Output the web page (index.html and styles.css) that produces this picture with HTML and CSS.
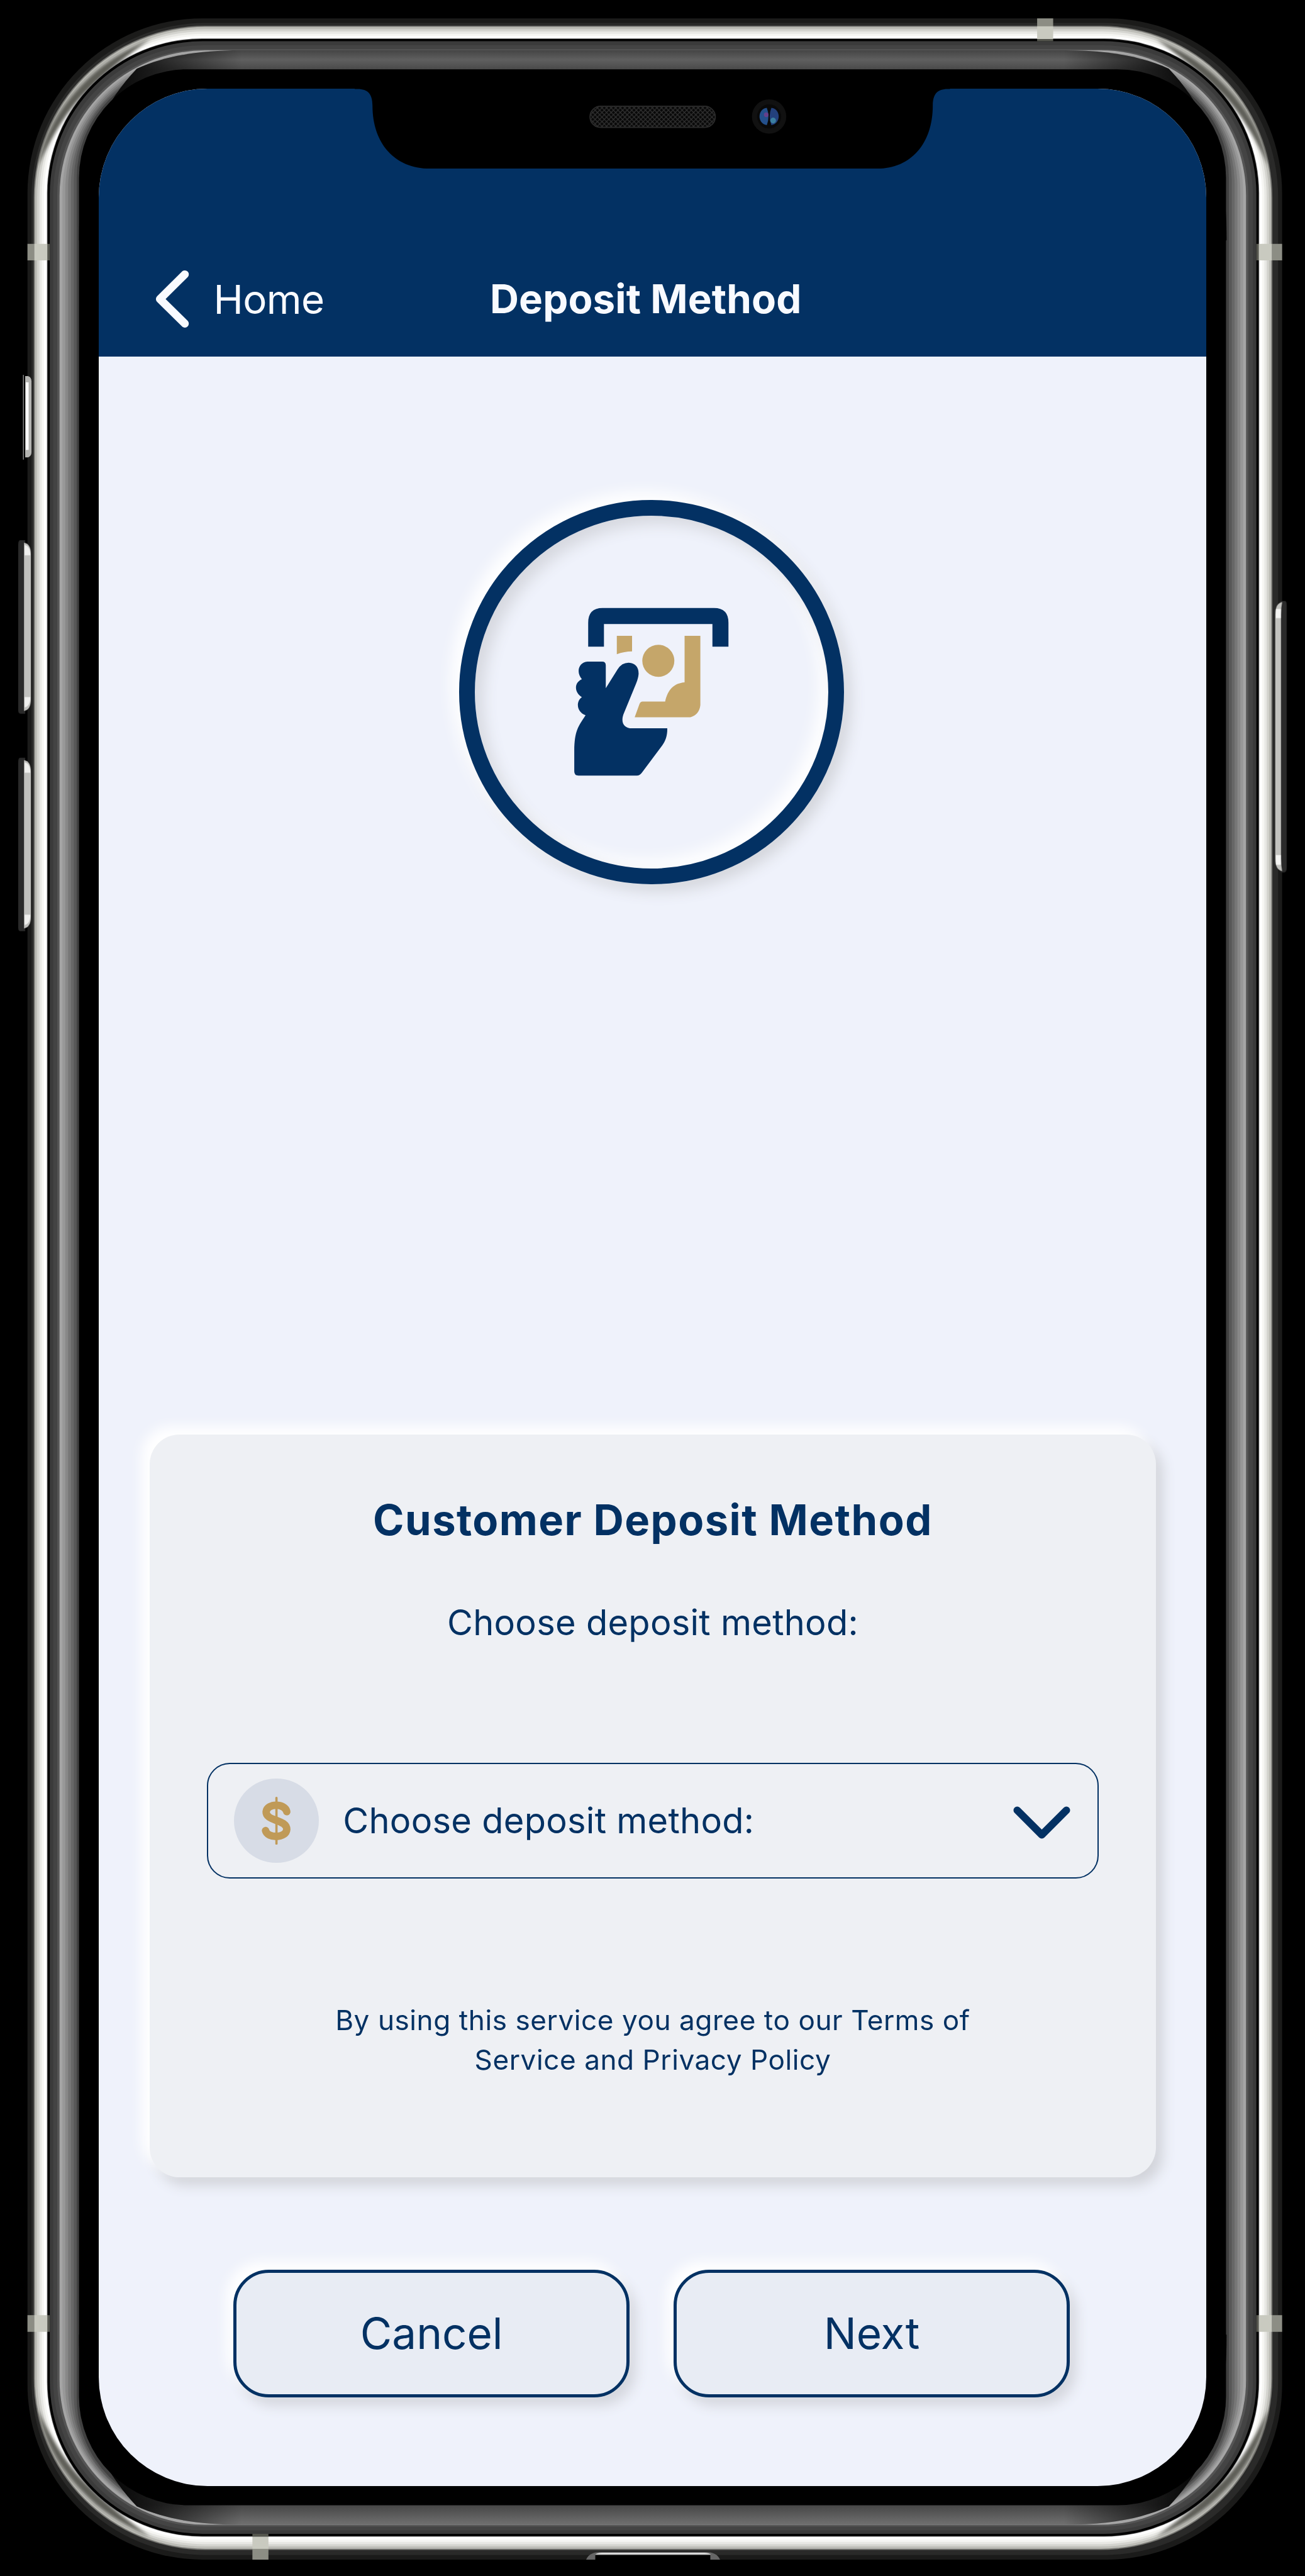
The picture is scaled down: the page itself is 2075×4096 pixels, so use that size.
FILE: index.html
```html
<!DOCTYPE html>
<html lang="en">
<head>
<meta charset="utf-8">
<title>Deposit Method</title>
<link rel="stylesheet" href="styles.css">
</head>
<body>
<div class="device">
  <svg class="frame" viewBox="0 0 2280 4500" aria-hidden="true">
    <defs>
      <linearGradient id="capTop" x1="0" y1="88" x2="0" y2="121" gradientUnits="userSpaceOnUse">
        <stop offset="0" stop-color="#454545"/><stop offset=".5" stop-color="#5f5f5f"/><stop offset="1" stop-color="#4a4a4a"/>
      </linearGradient>
      <linearGradient id="capBottom" x1="0" y1="4376" x2="0" y2="4411" gradientUnits="userSpaceOnUse">
        <stop offset="0" stop-color="#454545"/><stop offset="1" stop-color="#707070"/>
      </linearGradient>
      <linearGradient id="capFade" x1="170" y1="0" x2="2111" y2="0" gradientUnits="userSpaceOnUse">
        <stop offset="0" stop-color="#000"/><stop offset=".035" stop-color="#000" stop-opacity=".75"/><stop offset=".13" stop-color="#000" stop-opacity="0"/>
        <stop offset=".87" stop-color="#000" stop-opacity="0"/><stop offset=".965" stop-color="#000" stop-opacity=".75"/><stop offset="1" stop-color="#000"/>
      </linearGradient>
      <filter id="soft" x="-20%" y="-20%" width="140%" height="140%"><feGaussianBlur stdDeviation="3"/></filter>
      <path id="shade" d="M66 290C80 225 110 178 155 135C188 104 225 84 262 68C225 95 188 124 156 156C116 192 90 240 66 290Z"/>
      <g id="sideKey">
        <path d="M44 0H35Q32 0 32 8V297Q32 303 36 303H44Z" fill="#2a2a2a"/>
        <path d="M42 4Q54 6 54 24V278Q54 296 42 298Z" fill="#c1c1be"/>
        <path d="M43 8Q53 10 53 26H43ZM43 292Q53 290 53 274H43Z" fill="#f0f0ee"/>
      </g>
    </defs>
    <!-- outer edge and polished rail -->
    <rect x="48" y="32" width="2192" height="4440" rx="306" fill="#1b1b1a"/>
    <rect x="55" y="40" width="2178" height="4424" rx="304" fill="#2a2a29"/>
    <rect x="59" y="45" width="2164" height="4410" rx="300" fill="#777773"/>
    <rect x="61" y="47" width="2160" height="4406" rx="298" fill="#bdbdb7"/>
    <rect x="65" y="51" width="2152" height="4398" rx="294" fill="#d4d4cf"/>
    <rect x="69" y="55" width="2144" height="4390" rx="288" fill="#e8e8e4"/>
    <rect x="73" y="59" width="2136" height="4382" rx="283" fill="#f6f6f3"/>
    <rect x="77" y="63" width="2128" height="4374" rx="278" fill="#fff"/>
    <g fill="#5d5d57" filter="url(#soft)">
      <use href="#shade"/>
      <use href="#shade" transform="matrix(-1 0 0 1 2282 0)"/>
      <use href="#shade" transform="matrix(1 0 0 -1 0 4500)"/>
      <use href="#shade" transform="matrix(-1 0 0 -1 2282 4500)"/>
    </g>
    <rect x="82" y="67" width="2118" height="4365" rx="271" fill="#777"/>
    <rect x="83" y="68" width="2116" height="4363" rx="270" fill="#000"/>
    <rect x="87" y="72" width="2108" height="4355" rx="267" fill="#3b3b3b"/>
    <rect x="93" y="79" width="2096" height="4342" rx="262" fill="#444"/>
    <rect x="100" y="86" width="2081" height="4328" rx="256" fill="#555"/>
    <!-- inner side rails -->
    <rect x="104" y="88" width="2073" height="4323" rx="254" fill="#a5a5a5"/>
    <rect x="109" y="92" width="2063" height="4314" rx="246" fill="#989898"/>
    <rect x="114" y="97" width="2053" height="4305" rx="236" fill="#888"/>
    <rect x="119" y="102" width="2043" height="4296" rx="226" fill="#777"/>
    <rect x="124" y="107" width="2033" height="4286" rx="216" fill="#676767"/>
    <rect x="129" y="112" width="2023" height="4277" rx="204" fill="#575757"/>
    <rect x="134" y="117" width="2013" height="4267" rx="194" fill="#404040"/>
    <path d="M138 420C138 300 158 205 239 120C290 97 350 88 420 88H1861C1931 88 1991 97 2042 120C2123 205 2143 300 2143 420Z" fill="url(#capTop)"/>
    <path d="M138 420C138 300 158 205 239 120C290 97 350 88 420 88H1861C1931 88 1991 97 2042 120C2123 205 2143 300 2143 420Z" fill="url(#capFade)"/>
    <path d="M138 4079C138 4199 158 4294 239 4379C290 4402 350 4411 420 4411H1861C1931 4411 1991 4402 2042 4379C2123 4294 2143 4199 2143 4079Z" fill="url(#capBottom)"/>
    <path d="M138 4079C138 4199 158 4294 239 4379C290 4402 350 4411 420 4411H1861C1931 4411 1991 4402 2042 4379C2123 4294 2143 4199 2143 4079Z" fill="url(#capFade)"/>
    <rect x="138" y="121" width="2004" height="4256" rx="190" fill="#000"/>
    <!-- antenna bands -->
    <g fill="#8c8d84">
      <path d="M48 426H60V455H48ZM2222 426H2240V455H2222ZM48 4045H60V4074H48ZM2222 4045H2240V4074H2222ZM1812 32H1840V46H1812ZM441 4453H469V4472H441Z"/>
      <path d="M60 426H83V455H60ZM2199 426H2222V455H2199ZM60 4045H83V4074H60ZM2199 4045H2222V4074H2199ZM1812 46H1840V68H1812ZM441 4432H469V4453H441Z" fill="#c9cac0"/>
      <path d="M83 426H87V455H83ZM2195 426H2199V455H2195ZM83 4045H87V4074H83ZM2195 4045H2199V4074H2195ZM1812 68H1840V72H1812ZM441 4427H469V4432H441Z" fill="#55564e"/>
    </g>
    <!-- charging port -->
    <path d="M1024 4472Q1030 4459 1048 4459H1234Q1252 4459 1258 4472Z" fill="#666"/>
    <path d="M1040 4463Q1044 4460 1052 4460H1230Q1238 4460 1242 4463Z" fill="#ddd"/>
    <path d="M1040 4464H1241V4474H1040Z" fill="#000"/>
    <!-- side keys -->
    <path d="M40 655H42V803H40Z" fill="#777"/>
    <path d="M42 655H44V803H42Z" fill="#000"/>
    <path d="M44 657H49Q55 659 55 666V790Q55 797 49 799H44Z" fill="#b5b5b2"/>
    <path d="M45 668H50V786H45Z" fill="#fff"/>
    <use href="#sideKey" y="944"/>
    <use href="#sideKey" y="1324"/>
    <path d="M2237 1050H2245Q2248 1050 2248 1058V1516Q2248 1524 2244 1524H2237Z" fill="#2a2a2a"/>
    <path d="M2240 1052Q2228 1054 2228 1074V1500Q2228 1520 2240 1522Q2238 1512 2238 1500V1074Q2238 1062 2240 1052Z" fill="#c3c3bf"/>
    <path d="M2229 1064H2238V1080H2229ZM2229 1494H2238V1511H2229Z" fill="#f4f4f2"/>
  </svg>

  <main class="screen">
    <header class="nav">
      <a class="back">
        <svg class="back-icon" viewBox="0 0 60 102"><path d="M51.500 8L8 51L51.500 94" /></svg>
        <span>Home</span>
      </a>
      <h1 class="nav-title">Deposit Method</h1>
    </header>

    <section class="hero">
      <div class="badge">
        <svg class="cash-icon" viewBox="490 460 590 645">
          <g class="navy">
            <path d="M543 609V518Q543 462 598 462H1022Q1077 462 1077 518V609H1016V523H603V609Z"/>
            <path d="M540 666H596Q610 666 610 680V767L655 695Q671 670 697 670Q735 673 735 712Q734 728 726 748L680 860C664 896 678 920 710 920H844C845 945 838 968 825 985L748 1088Q740 1100 728 1100H506Q490 1100 490 1084V1005C491 930 504 915 533 870C499 858 495 818 519 801C488 782 490 745 519 733C495 705 508 668 540 666Z"/>
          </g>
          <g class="gold">
            <path d="M652 568H710V627Q680 627 652 638Z"/>
            <circle cx="810" cy="663" r="61"/>
            <path d="M910 568H970V832Q966 868 932 878H720L738 828Q742 818 750 818H836C846 772 870 748 910 745Z"/>
          </g>
        </svg>
      </div>
    </section>

    <section class="card">
      <h2 class="card-title">Customer Deposit Method</h2>
      <p class="card-sub">Choose deposit method:</p>
      <div class="select">
        <span class="coin">
          <svg class="coin-icon" viewBox="0 0 54 84"><path class="thick" d="M45 26C42 11 11 11 9 26C8 43 45 39 45 57C44 73 11 73 8 59"/><path class="thin" d="M27 2V82"/></svg>
        </span>
        <span class="select-label">Choose deposit method:</span>
        <svg class="select-arrow" viewBox="0 0 100 58"><path d="M7 7L50 50L93 7"/></svg>
      </div>
      <p class="terms">By using this service you agree to our Terms of<br>Service and Privacy Policy</p>
    </section>

    <div class="actions">
      <button class="btn">Cancel</button>
      <button class="btn">Next</button>
    </div>
  </main>

  <svg class="notch" viewBox="620 150 1040 150" aria-hidden="true">
    <defs>
      <pattern id="mesh" width="8" height="8" patternUnits="userSpaceOnUse">
        <rect width="8" height="8" fill="#080808"/><path d="M0 0L8 8M8 0L0 8" stroke="#333" stroke-width="1.300"/>
      </pattern>
    </defs>
    <path d="M620 150V155H625C643 155 651 164 651 184C651 250 690 294 751 294H1533C1592 294 1630 250 1630 184C1630 164 1638 155 1656 155H1660V150Z" fill="#000"/>
    <rect x="1031" y="185" width="219" height="37" rx="18.500" fill="url(#mesh)" stroke="#2a2a2a" stroke-width="2"/>
    <circle cx="1344" cy="203" r="30" fill="#111"/>
    <circle cx="1344" cy="203" r="21" fill="#090909"/>
    <path d="M1340 188C1323 190 1323 216 1340 218Q1346 203 1340 188Z" fill="#24508c"/>
    <path d="M1348 188C1365 190 1365 216 1348 218Q1342 203 1348 188Z" fill="#23407c"/>
    <circle cx="1339" cy="200" r="4" fill="#65408c"/>
    <circle cx="1351" cy="210" r="5" fill="#3b7fa0"/>
  </svg>
</div>
</body>
</html>
```
FILE: styles.css
```css
html, body { margin: 0; background: #000; }
body { width: 2075px; height: 4096px; overflow: hidden; }
h1, h2, p { margin: 0; }

.device {
  --navy: #033163;
  zoom: 0.9101;
  position: relative;
  box-sizing: border-box;
  width: 2280px;
  height: 4500px;
  padding: 155px 172px 156px 173px;
  font-family: Inter, "Liberation Sans", sans-serif;
  color: var(--navy);
}
.frame { position: absolute; left: 0; top: 0; width: 2280px; height: 4500px; }
.notch { position: absolute; left: 620px; top: 150px; width: 1040px; height: 150px; }

.screen {
  position: relative;
  height: 4189px;
  border-radius: 190px;
  overflow: hidden;
  background: #eff2fb;
  display: flex;
  flex-direction: column;
}

.nav {
  height: 468px;
  box-sizing: border-box;
  padding: 316px 0 0 98px;
  background: var(--navy);
  color: #f8faff;
  display: grid;
  grid-template-columns: 585px auto 1fr;
  align-items: start;
}
.back { display: flex; align-items: center; gap: 42px; height: 102px; font-size: 70px; letter-spacing: -0.6px; }
.back-icon { width: 60px; height: 102px; fill: none; stroke: currentColor; stroke-width: 14; stroke-linecap: round; stroke-linejoin: round; }
.nav-title { font-size: 70px; font-weight: 700; line-height: 102px; letter-spacing: 0.1px; white-space: nowrap; }

.hero { height: 1883px; box-sizing: border-box; padding-top: 250px; display: flex; justify-content: center; align-items: flex-start; }
.badge {
  width: 672px;
  height: 672px;
  margin-right: 4px;
  box-sizing: border-box;
  border: 28px solid var(--navy);
  border-radius: 50%;
  display: flex;
  align-items: center;
  justify-content: center;
  box-shadow: -14px -14px 26px #fff, 12px 12px 26px #d3d5db, inset 14px 14px 26px #d6d8df, inset -14px -14px 28px #fff;
}
.cash-icon { width: 271px; height: 296px; }
.navy { fill: var(--navy); }
.gold { fill: #c5a66a; }

.card {
  width: 1759px;
  height: 1298px;
  margin-left: 88px;
  box-sizing: border-box;
  padding: 105px 100px 0;
  border-radius: 52px;
  background: #eef0f4;
  box-shadow: -14px -14px 22px #fff, 12px 14px 22px #d2d4da;
  text-align: center;
  flex: none;
}
.card-title { font-size: 73.5px; line-height: 90px; font-weight: 700; letter-spacing: 1.6px; }
.card-sub { margin-top: 91px; font-size: 61.5px; line-height: 86px; letter-spacing: 0.3px; }
.select {
  margin-top: 202px;
  height: 202px;
  box-sizing: border-box;
  border: 2.2px solid var(--navy);
  border-radius: 40px;
  padding: 0 48px 0 46px;
  display: flex;
  align-items: center;
}
.coin { width: 148px; height: 148px; border-radius: 50%; background: #d7dce6; display: flex; align-items: center; justify-content: center; }
.coin-icon { width: 54px; height: 84px; fill: none; stroke: #c09a57; stroke-linecap: round; }
.thick { stroke-width: 13; }
.thin { stroke-width: 4; }
.select-label { margin-left: 42px; flex: 1; text-align: left; font-size: 61.5px; letter-spacing: 0.3px; }
.select-arrow { width: 100px; height: 58px; margin-top: 7px; fill: none; stroke: var(--navy); stroke-width: 13; stroke-linecap: round; stroke-linejoin: round; }
.terms { margin-top: 213px; font-size: 48.5px; line-height: 69.5px; letter-spacing: 0.6px; }

.actions { margin: 161px 0 0 235px; display: flex; gap: 77px; }
.btn {
  width: 692px;
  height: 224px;
  padding: 0;
  border: 5.5px solid var(--navy);
  border-radius: 62px;
  background: #e8ecf4;
  color: var(--navy);
  font: 400 76px Inter, "Liberation Sans", sans-serif;
  letter-spacing: 0;
  box-shadow: -12px -14px 22px #fff, 10px 14px 22px #d4d6dd;
}
```
